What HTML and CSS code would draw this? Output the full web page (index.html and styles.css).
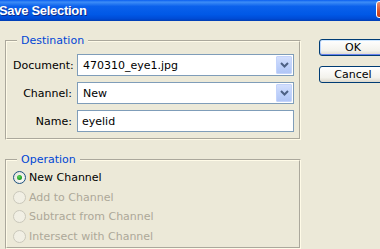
FILE: index.html
```html
<!DOCTYPE html>
<html lang="en">
  <head>
    <meta charset="UTF-8">
    <meta name="viewport" content="width=device-width, initial-scale=1.0">
    <title>Save Selection</title>

    <link rel="stylesheet" href="styles.css">
  </head>

  <body>
    <div class="title-bar">
      <span class="title">Save Selection</span>
      <span class="close-btn"></span>
    </div>

    <div class="content">
      <div class="groups">
        <fieldset class="group destination">
          <legend>Destination</legend>

          <label class="field-label">Document:</label>
          <div class="combo">
            <span class="combo-value">470310_eye1.jpg</span>
            <span class="combo-arrow">
              <svg width="9" height="6" viewBox="0 0 9 6"><polyline points="1,1 4.5,4.5 8,1" fill="none" stroke="#4d6185" stroke-width="2"/></svg>
            </span>
          </div>

          <label class="field-label">Channel:</label>
          <div class="combo">
            <span class="combo-value">New</span>
            <span class="combo-arrow">
              <svg width="9" height="6" viewBox="0 0 9 6"><polyline points="1,1 4.5,4.5 8,1" fill="none" stroke="#4d6185" stroke-width="2"/></svg>
            </span>
          </div>

          <label class="field-label">Name:</label>
          <input class="text-input" type="text" value="eyelid">
        </fieldset>

        <fieldset class="group operation">
          <legend>Operation</legend>

          <div class="radio-row">
            <span class="radio checked"></span>
            <span>New Channel</span>
          </div>
          <div class="radio-row disabled">
            <span class="radio"></span>
            <span>Add to Channel</span>
          </div>
          <div class="radio-row disabled">
            <span class="radio"></span>
            <span>Subtract from Channel</span>
          </div>
          <div class="radio-row disabled">
            <span class="radio"></span>
            <span>Intersect with Channel</span>
          </div>
        </fieldset>
      </div>

      <div class="actions">
        <button class="btn default">OK</button>
        <button class="btn">Cancel</button>
      </div>
    </div>
  </body>
</html>
```

FILE: styles.css
```css
* {
  box-sizing: border-box;
  padding: 0;
  margin: 0;
}

html, body {
  width: 380px;
  height: 249px;
  overflow: hidden;
}

body {
  background-color: #ece9d8;
  font-family: 'DejaVu Sans', sans-serif;
  font-size: 11px;
  color: #000;
}

/* barra de titulo estilo XP */
.title-bar {
  display: flex;
  align-items: center;
  height: 21px;
  background: linear-gradient(#0a5ef0 0%, #3d8df7 10%, #0b61ec 30%, #0058e6 70%, #004ad4 90%, #003cb0 100%);
}

.title {
  color: #fff;
  font-family: 'Liberation Sans', Arial, sans-serif;
  font-weight: bold;
  font-size: 13px;
  letter-spacing: -0.3px;
  margin-left: -1px;
  text-shadow: 1px 1px 0 #0b2a8a;
}

.close-btn {
  align-self: flex-start;
  width: 21px;
  height: 17px;
  margin: 1px -17px 0 auto;
  border: 1px solid #fff;
  border-radius: 3px;
  background: linear-gradient(#ea8d70, #d8532f 60%, #c23b19);
}

.content {
  display: flex;
  padding-left: 5px;
}

.groups {
  width: 296px;
  flex-shrink: 0;
}

.group {
  border: 2px groove #fffbe8;
}

.group legend {
  color: #0046d5;
  line-height: 14px;
  padding: 0 4px;
  margin-left: 4px;
}

.destination {
  margin-top: 13px;
  padding: 6px 5px 6px 6px;
  display: grid;
  grid-template-columns: 59px 1fr;
  grid-auto-rows: 22px;
  column-gap: 5px;
  row-gap: 6px;
  align-items: center;
}

.field-label {
  text-align: right;
}

.combo, .text-input {
  height: 22px;
  border: 1px solid #7f9db9;
  background-color: #fff;
}

.combo {
  display: flex;
  align-items: center;
  padding: 1px;
}

.combo-value {
  flex: 1;
  padding-left: 4px;
}

.combo-arrow {
  width: 16px;
  height: 100%;
  display: flex;
  align-items: center;
  justify-content: center;
  border: 1px solid #c3d3fb;
  border-radius: 1px;
  background: linear-gradient(#d3dffd, #bccffa 60%, #b1c6f6);
}

.text-input {
  font: inherit;
  color: inherit;
  padding-left: 4px;
  outline: none;
}

.operation {
  margin-top: 13px;
  padding: 1px 5px 1px 6px;
}

.radio-row {
  display: flex;
  align-items: center;
  gap: 3px;
  height: 19.5px;
}

.radio-row.disabled {
  color: #aca899;
}

.radio {
  width: 13px;
  height: 13px;
  border-radius: 50%;
  border: 1px solid #cac8bb;
  background-color: #f1efe4;
  display: flex;
  align-items: center;
  justify-content: center;
}

.radio.checked {
  border-color: #1c5180;
  background: radial-gradient(circle at 60% 60%, #fff, #dcdad0);
}

.radio.checked::after {
  content: "";
  width: 5px;
  height: 5px;
  border-radius: 50%;
  background: radial-gradient(circle at 40% 35%, #5fd35f, #21a121 60%, #188a18);
}

.actions {
  display: flex;
  flex-direction: column;
  flex-shrink: 0;
  gap: 10px;
  margin-left: 18px;
  padding-top: 18px;
}

.btn {
  width: 68px;
  height: 17px;
  flex-shrink: 0;
  font: inherit;
  color: #000;
  line-height: 15px;
  border: 1px solid #003c74;
  border-radius: 3px;
  background: linear-gradient(#fff, #f3f2ec 70%, #dcd8cc);
}

.btn.default {
  box-shadow: inset 0 1px 0 #cee7ff, inset 0 -1px 0 #6982ee, inset 1px 0 0 #b8d4fe, inset -1px 0 0 #89adf4;
}
```
